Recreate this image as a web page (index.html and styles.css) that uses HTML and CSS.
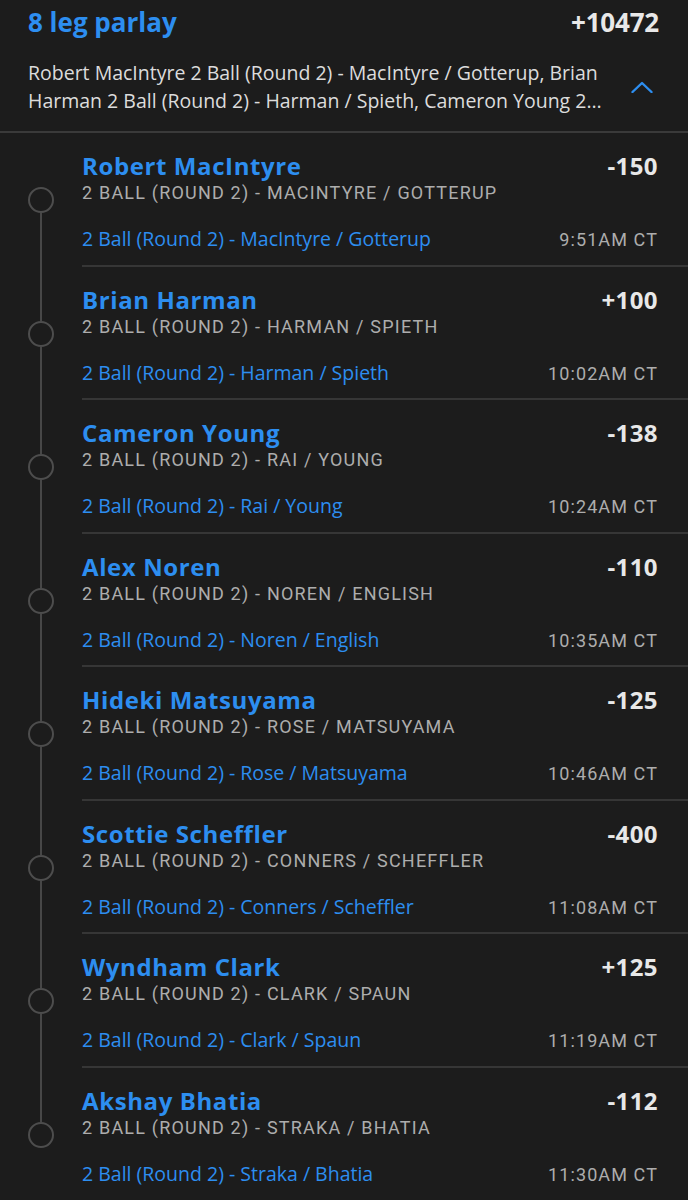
FILE: index.html
```html
<!DOCTYPE html>
<html>
<head>
<meta charset="utf-8">
<link rel="stylesheet" href="styles.css">
</head>
<body>
<div class="page">
  <header class="parlay">
    <div class="parlay-top">
      <div class="parlay-title">8 leg parlay</div>
      <div class="parlay-odds">+10472</div>
    </div>
    <div class="parlay-desc-row">
      <div class="parlay-desc">Robert MacIntyre 2 Ball (Round 2) - MacIntyre / Gotterup, Brian Harman 2 Ball (Round 2) - Harman / Spieth, Cameron Young 2 Ball (Round 2) - Rai / Young, Alex Noren 2 Ball (Round 2) - Noren / English, Hideki Matsuyama 2 Ball (Round 2) - Rose / Matsuyama</div>
      <svg class="chevron" width="22" height="12" viewBox="0 0 22 12"><path d="M1.5 11 L11 2 L20.5 11" fill="none" stroke="#2d8ef0" stroke-width="2.4" stroke-linecap="round" stroke-linejoin="round"/></svg>
    </div>
  </header>

  <div class="legs">
    <div class="leg first">
      <div class="rail"><div class="seg top"></div><div class="dot"></div><div class="seg bottom"></div></div>
      <div class="leg-body">
        <div class="leg-top"><span class="leg-name">Robert MacIntyre</span><span class="leg-odds">-150</span></div>
        <div class="leg-market">2 Ball (Round 2) - MacIntyre / Gotterup</div>
        <div class="leg-bottom"><span class="leg-event">2 Ball (Round 2) - MacIntyre / Gotterup</span><span class="leg-time">9:51AM CT</span></div>
      </div>
    </div>
    <div class="leg">
      <div class="rail"><div class="seg top"></div><div class="dot"></div><div class="seg bottom"></div></div>
      <div class="leg-body">
        <div class="leg-top"><span class="leg-name">Brian Harman</span><span class="leg-odds">+100</span></div>
        <div class="leg-market">2 Ball (Round 2) - Harman / Spieth</div>
        <div class="leg-bottom"><span class="leg-event">2 Ball (Round 2) - Harman / Spieth</span><span class="leg-time">10:02AM CT</span></div>
      </div>
    </div>
    <div class="leg">
      <div class="rail"><div class="seg top"></div><div class="dot"></div><div class="seg bottom"></div></div>
      <div class="leg-body">
        <div class="leg-top"><span class="leg-name">Cameron Young</span><span class="leg-odds">-138</span></div>
        <div class="leg-market">2 Ball (Round 2) - Rai / Young</div>
        <div class="leg-bottom"><span class="leg-event">2 Ball (Round 2) - Rai / Young</span><span class="leg-time">10:24AM CT</span></div>
      </div>
    </div>
    <div class="leg">
      <div class="rail"><div class="seg top"></div><div class="dot"></div><div class="seg bottom"></div></div>
      <div class="leg-body">
        <div class="leg-top"><span class="leg-name">Alex Noren</span><span class="leg-odds">-110</span></div>
        <div class="leg-market">2 Ball (Round 2) - Noren / English</div>
        <div class="leg-bottom"><span class="leg-event">2 Ball (Round 2) - Noren / English</span><span class="leg-time">10:35AM CT</span></div>
      </div>
    </div>
    <div class="leg">
      <div class="rail"><div class="seg top"></div><div class="dot"></div><div class="seg bottom"></div></div>
      <div class="leg-body">
        <div class="leg-top"><span class="leg-name">Hideki Matsuyama</span><span class="leg-odds">-125</span></div>
        <div class="leg-market">2 Ball (Round 2) - Rose / Matsuyama</div>
        <div class="leg-bottom"><span class="leg-event">2 Ball (Round 2) - Rose / Matsuyama</span><span class="leg-time">10:46AM CT</span></div>
      </div>
    </div>
    <div class="leg">
      <div class="rail"><div class="seg top"></div><div class="dot"></div><div class="seg bottom"></div></div>
      <div class="leg-body">
        <div class="leg-top"><span class="leg-name">Scottie Scheffler</span><span class="leg-odds">-400</span></div>
        <div class="leg-market">2 Ball (Round 2) - Conners / Scheffler</div>
        <div class="leg-bottom"><span class="leg-event">2 Ball (Round 2) - Conners / Scheffler</span><span class="leg-time">11:08AM CT</span></div>
      </div>
    </div>
    <div class="leg">
      <div class="rail"><div class="seg top"></div><div class="dot"></div><div class="seg bottom"></div></div>
      <div class="leg-body">
        <div class="leg-top"><span class="leg-name">Wyndham Clark</span><span class="leg-odds">+125</span></div>
        <div class="leg-market">2 Ball (Round 2) - Clark / Spaun</div>
        <div class="leg-bottom"><span class="leg-event">2 Ball (Round 2) - Clark / Spaun</span><span class="leg-time">11:19AM CT</span></div>
      </div>
    </div>
    <div class="leg last">
      <div class="rail"><div class="seg top"></div><div class="dot"></div><div class="seg bottom"></div></div>
      <div class="leg-body">
        <div class="leg-top"><span class="leg-name">Akshay Bhatia</span><span class="leg-odds">-112</span></div>
        <div class="leg-market">2 Ball (Round 2) - Straka / Bhatia</div>
        <div class="leg-bottom"><span class="leg-event">2 Ball (Round 2) - Straka / Bhatia</span><span class="leg-time">11:30AM CT</span></div>
      </div>
    </div>
  </div>
</div>
</body>
</html>
```

FILE: styles.css
```css
html, body {
  margin: 0;
  padding: 0;
  background: #1c1c1c;
}
body {
  font-family: "Open Sans", Lato, sans-serif;
  color: #e6e6e6;
  width: 688px;
  height: 1200px;
  overflow: hidden;
}
.parlay {
  padding: 6px 29px 16px 28px;
  border-bottom: 2px solid #3a3a3a;
}
.parlay-top {
  display: flex;
  justify-content: space-between;
  align-items: center;
  height: 32px;
}
.parlay-title {
  color: #2d8ef0;
  font-weight: 700;
  font-size: 26px;
  letter-spacing: 0;
}
.parlay-odds {
  color: #e8e8e8;
  font-weight: 700;
  font-size: 26px;
  letter-spacing: -0.2px;
}
.parlay-desc-row {
  display: flex;
  align-items: center;
  margin-top: 21px;
}
.parlay-desc {
  flex: 1;
  font-size: 19.5px;
  line-height: 28px;
  color: #dcdcdc;
  display: -webkit-box;
  -webkit-line-clamp: 2;
  -webkit-box-orient: vertical;
  overflow: hidden;
  margin-right: 18px;
}
.chevron {
  margin-right: 6px;
  flex: none;
}
.leg {
  display: flex;
  height: 133.5px;
}
.rail {
  width: 82px;
  flex: none;
  display: flex;
  flex-direction: column;
  align-items: center;
}
.seg {
  width: 2px;
  background: #474747;
}
.seg.top { height: 54px; }
.seg.bottom { flex: 1; }
.leg.first .seg.top,
.leg.last .seg.bottom { background: transparent; }
.dot {
  width: 22px;
  height: 22px;
  border: 2px solid #4d4d4d;
  border-radius: 50%;
  flex: none;
}
.leg-body {
  flex: 1;
  border-bottom: 2px solid #363636;
  padding: 17px 30px 0 0;
}
.leg.last .leg-body { border-bottom: none; }
.leg-top {
  display: flex;
  justify-content: space-between;
  align-items: baseline;
  height: 32px;
  line-height: 32px;
}
.leg-name {
  color: #2d8ef0;
  font-weight: 700;
  font-size: 24px;
  letter-spacing: 0.6px;
}
.leg-odds {
  color: #e8e8e8;
  font-weight: 700;
  font-size: 24px;
  letter-spacing: 0.4px;
}
.leg-market {
  font-family: Roboto, sans-serif;
  text-transform: uppercase;
  color: #adadad;
  font-size: 18px;
  letter-spacing: 1.2px;
  line-height: 22px;
}
.leg-bottom {
  display: flex;
  justify-content: space-between;
  align-items: baseline;
  margin-top: 22px;
  line-height: 26px;
}
.leg-event {
  color: #2d8ef0;
  font-size: 19.5px;
}
.leg-time {
  font-family: Roboto, sans-serif;
  color: #adadad;
  font-size: 18px;
  letter-spacing: 1.1px;
}
```
